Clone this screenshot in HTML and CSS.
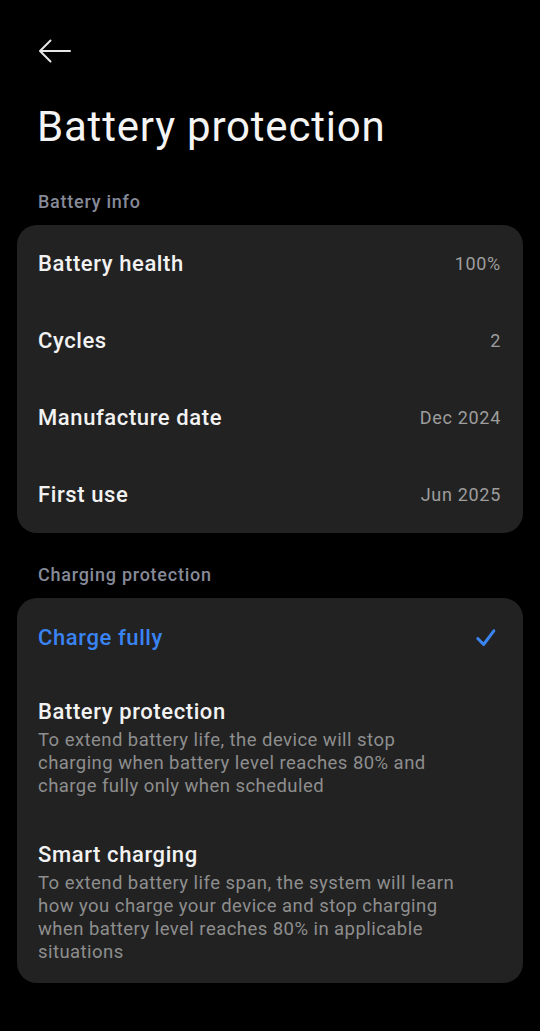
FILE: index.html
```html
<!DOCTYPE html>
<html lang="en">
<head>
<meta charset="utf-8">
<title>Battery protection</title>
<link rel="stylesheet" href="styles.css">
</head>
<body>
<div class="screen">
  <header class="topbar">
    <svg class="back" width="34" height="24" viewBox="0 0 34 24" aria-hidden="true">
      <path d="M2 12 H32 M2 12 L12.5 1.5 M2 12 L12.5 22.5" fill="none" stroke="#e6e6e6" stroke-width="2" stroke-linecap="round" stroke-linejoin="round"/>
    </svg>
  </header>
  <h1 class="title">Battery protection</h1>

  <div class="section-label">Battery info</div>
  <div class="card">
    <div class="row"><span class="row-title">Battery health</span><span class="row-value">100%</span></div>
    <div class="row"><span class="row-title">Cycles</span><span class="row-value">2</span></div>
    <div class="row"><span class="row-title">Manufacture date</span><span class="row-value">Dec 2024</span></div>
    <div class="row"><span class="row-title">First use</span><span class="row-value">Jun 2025</span></div>
  </div>

  <div class="section-label second">Charging protection</div>
  <div class="card card-options">
    <div class="row option-selected">
      <span class="row-title selected">Charge fully</span>
      <svg class="check" width="20" height="18" viewBox="0 0 20 18" aria-hidden="true">
        <path d="M1.8 9.5 L7.6 15.5 L17.8 1.8" fill="none" stroke="#3a84f2" stroke-width="3" stroke-linecap="round" stroke-linejoin="round"/>
      </svg>
    </div>
    <div class="option">
      <div class="row-title">Battery protection</div>
      <div class="desc">To extend battery life, the device will stop charging when battery level reaches 80% and charge fully only when scheduled</div>
    </div>
    <div class="option last">
      <div class="row-title">Smart charging</div>
      <div class="desc">To extend battery life span, the system will learn how you charge your device and stop charging when battery level reaches 80% in applicable situations</div>
    </div>
  </div>
</div>
</body>
</html>
```

FILE: styles.css
```css
html, body {
  margin: 0;
  padding: 0;
  background: #000;
}
body {
  font-family: Roboto, "Noto Sans", sans-serif;
  color: #f2f2f2;
}
.screen {
  width: 540px;
  min-height: 1031px;
  padding: 0 17px;
  box-sizing: border-box;
}
.topbar {
  height: 63px;
  padding-top: 39px;
  padding-left: 21px;
  box-sizing: border-box;
  display: flex;
  align-items: flex-start;
}
.back {
  display: block;
}
.title {
  margin: 36px 0 0 20px;
  font-size: 42px;
  font-weight: 400;
  line-height: 56px;
  letter-spacing: 0.8px;
  color: #f4f4f4;
}
.section-label {
  margin: 36px 0 0 21px;
  font-size: 18px;
  font-weight: 500;
  line-height: 22px;
  letter-spacing: 0.75px;
  color: #868a98;
}
.section-label.second {
  margin-top: 31px;
}
.card {
  margin-top: 12px;
  background: #222222;
  border-radius: 20px;
  overflow: hidden;
}
.row {
  height: 77px;
  display: flex;
  align-items: center;
  justify-content: space-between;
  padding: 0 22px 0 21px;
}
.row-title {
  font-size: 22px;
  font-weight: 500;
  line-height: 28px;
  letter-spacing: 0.6px;
  color: #f2f2f2;
}
.row-value {
  font-size: 18px;
  font-weight: 400;
  letter-spacing: 0.7px;
  color: #9d9d9d;
}
.option-selected {
  height: 79px;
  padding-right: 27px;
}
.row-title.selected {
  color: #3a84f2;
}
.check {
  display: block;
}
.option {
  padding: 21px 60px 22px 21px;
}
.option.last {
  padding-bottom: 19px;
}
.desc {
  margin-top: 3px;
  font-size: 18.5px;
  line-height: 23px;
  letter-spacing: 0.45px;
  color: #8e8e8e;
}
```
